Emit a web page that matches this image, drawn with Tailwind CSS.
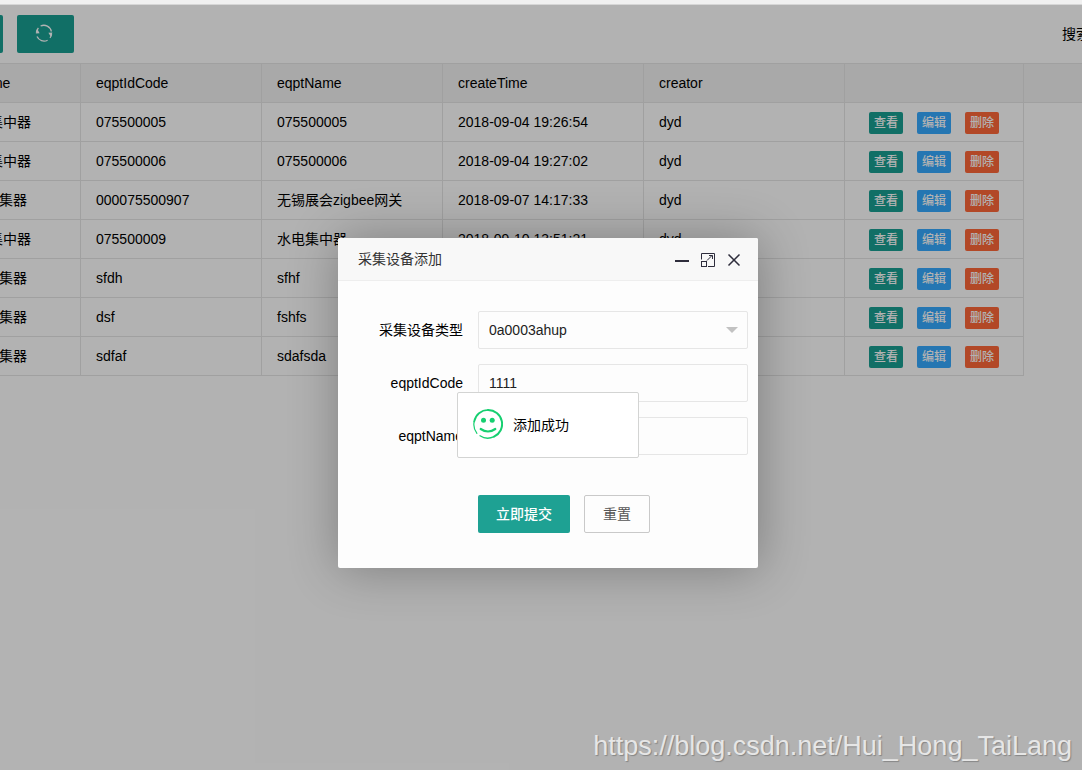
<!DOCTYPE html>
<html lang="zh-CN">
<head>
<meta charset="utf-8">
<title>采集设备</title>
<script src="https://cdn.jsdelivr.net/npm/@tailwindcss/browser@4"></script>
</head>
<body class="relative flex min-h-screen flex-col overflow-hidden bg-white font-['Liberation_Sans','Noto_Sans_CJK_SC',sans-serif] text-sm text-black">
<div class="h-1 bg-[#f0f0f0]"></div>
<main class="relative flex-1 overflow-hidden border-t border-[#d6d6d6]">
  <div class="flex h-[58px] items-center justify-between">
    <div class="-ml-[54px] flex gap-3.5">
      <button type="button" aria-label="添加" class="h-[38px] w-[57px] rounded-xs bg-[#19a093]"></button>
      <button type="button" aria-label="刷新" class="flex h-[38px] w-[57px] items-center justify-center rounded-xs bg-[#19a093] text-white">
        <svg class="-mt-0.5 -ml-1 size-[18px]" viewBox="0 0 18 18" fill="none" stroke="currentColor" stroke-width="1.3">
          <path d="M5.6 2A7.7 7.7 0 0 1 16.4 7.5M15 13.9A7.7 7.7 0 0 0 16.6 10M12.6 16.2A7.7 7.7 0 0 1 2 12.6M1.4 8.6A7.7 7.7 0 0 1 3.4 4"/>
          <path d="M0.8 9.6 2.4 5 4.6 9.2ZM13.4 8.8 17.4 8.4 16 13Z" fill="currentColor" stroke="none"/>
        </svg>
      </button>
    </div>
    <label class="-mr-2 whitespace-nowrap pl-1">搜索</label>
  </div>
  <table class="-ml-[42px] w-[calc(100%+43px)] table-fixed border-separate border-spacing-0 border-t border-[#e6e6e6] text-left [&_td]:border-r [&_td]:border-b [&_td]:border-[#e6e6e6] [&_td]:px-[15px] [&_th]:border-r [&_th]:border-b [&_th]:border-[#e6e6e6] [&_th]:bg-[#f2f2f2] [&_th]:px-[15px] [&_th]:font-normal [&_tr]:h-[39px] [&_tr]:whitespace-nowrap">
    <colgroup><col class="w-[123px]"><col class="w-[181px]"><col class="w-[181px]"><col class="w-[201px]"><col class="w-[201px]"><col class="w-[179px]"><col></colgroup>
    <thead><tr><th>Name</th><th>eqptIdCode</th><th>eqptName</th><th>createTime</th><th>creator</th><th></th><th></th></tr></thead>
    <tbody id="rows"></tbody>
  </table>
</main>
<template id="actions">
  <div class="flex justify-center gap-3.5 pt-0.5 text-xs font-medium text-white">
    <button type="button" class="h-[22px] w-[34px] rounded-xs bg-[#19a093]">查看</button>
    <button type="button" class="h-[22px] w-[34px] rounded-xs bg-[#35a9ff]">编辑</button>
    <button type="button" class="h-[22px] w-[34px] rounded-xs bg-[#ff6838]">删除</button>
  </div>
</template>
<div class="absolute inset-x-0 top-[5px] bottom-0 bg-black/30"></div>

<section role="dialog" aria-labelledby="dialog-title" class="absolute top-[238px] left-[338px] w-[420px] rounded-xs bg-[#fdfdfd] pb-[35px] shadow-[1px_1px_50px_rgba(0,0,0,0.3)]">
  <header class="flex h-[43px] items-center justify-between rounded-t-xs border-b border-[#eee] bg-[#f8f8f8] pr-4 pl-5 text-[#333]">
    <h2 id="dialog-title">采集设备添加</h2>
    <div class="flex gap-2.5 pt-0.5 text-[#2e2d3c]">
      <button type="button" aria-label="最小化"><svg class="size-4" viewBox="0 0 16 16" fill="currentColor"><path d="M1 8h14v2H1z"/></svg></button>
      <button type="button" aria-label="最大化"><svg class="size-4" viewBox="0 0 16 16" fill="none" stroke="currentColor"><path d="M1.5 7.5V1.5H14.5V14.5H8"/><rect x="1.5" y="9.5" width="5" height="5"/><path d="M7 8.5 12 3.5M9 3.5H12.5V7"/></svg></button>
      <button type="button" aria-label="关闭"><svg class="size-4" viewBox="0 0 16 16" fill="none" stroke="currentColor" stroke-width="1.5"><path d="m2.5 2.5 11 11M13.5 2.5l-11 11"/></svg></button>
    </div>
  </header>
  <form class="flex flex-col gap-[15px] pt-[30px] pr-2.5">
    <div class="flex items-center">
      <label for="type" class="w-[140px] pr-[15px] text-right">采集设备类型</label>
      <div class="relative flex-1">
        <select id="type" class="block h-[38px] w-full appearance-none rounded-xs border border-[#e6e6e6] bg-transparent pl-2.5 text-[#222]"><option>0a0003ahup</option></select>
        <svg class="pointer-events-none absolute top-4 right-2.5 h-1.5 w-3" viewBox="0 0 12 6" fill="#c2c2c2"><path d="M0 0h12L6 6z"/></svg>
      </div>
    </div>
    <div class="flex items-center">
      <label for="code" class="w-[140px] pr-[15px] text-right">eqptIdCode</label>
      <input id="code" type="text" value="1111" class="h-[38px] min-w-0 flex-1 rounded-xs border border-[#e6e6e6] bg-transparent pl-2.5 text-[#222]">
    </div>
    <div class="flex items-center">
      <label for="name" class="w-[140px] pr-[15px] text-right">eqptName</label>
      <input id="name" type="text" class="h-[38px] min-w-0 flex-1 rounded-xs border border-[#e6e6e6] bg-transparent pl-2.5">
    </div>
    <div class="flex gap-3.5 pt-[25px] pl-[140px]">
      <button type="button" class="h-[38px] rounded-xs bg-[#1ea193] px-[18px] font-medium text-white">立即提交</button>
      <button type="reset" class="h-[38px] rounded-xs border border-[#c9c9c9] px-[18px] text-[#555]">重置</button>
    </div>
  </form>
</section>

<div role="status" class="absolute top-[392px] left-[457px] flex h-[66px] w-[182px] items-center gap-2.5 rounded-xs border border-[#d3d4d3] bg-white pl-[15px]">
  <svg class="-mt-0.5 size-[30px]" viewBox="0 0 30 30" fill="none" stroke="#16cf70" stroke-linecap="round">
    <path d="M3.9 24.3A14.2 14.2 0 0 1 1.2 12.5" stroke-width="1.2"/>
    <path d="M1.2 12.5A14 14 0 0 1 15 1" stroke-width="1.7"/>
    <path d="M15 1A14 14 0 0 1 21 27.7" stroke-width="2"/>
    <path d="M21 27.7A14.2 14.2 0 0 1 7 26.8" stroke-width="1.3"/>
    <path d="M7.7 20Q15 25 22.3 20" stroke-width="2.2"/>
    <g fill="#16cf70" stroke="none"><circle cx="10.5" cy="11.3" r="2.5"/><circle cx="19.2" cy="11.3" r="2.5"/></g>
  </svg>
  <span>添加成功</span>
</div>

<p class="absolute right-2.5 bottom-2 text-[27px] leading-8 text-[#e6e6e6] [text-shadow:1px_1px_1px_rgba(0,0,0,0.25)]">https://blog.csdn.net/Hui_Hong_TaiLang</p>

<script>
const data = [
  ['集中器', '075500005', '075500005', '2018-09-04 19:26:54', 'dyd'],
  ['集中器', '075500006', '075500006', '2018-09-04 19:27:02', 'dyd'],
  ['采集器', '000075500907', '无锡展会zigbee网关', '2018-09-07 14:17:33', 'dyd'],
  ['集中器', '075500009', '水电集中器', '2018-09-10 13:51:21', 'dyd'],
  ['采集器', 'sfdh', 'sfhf', '', ''],
  ['采集器', 'dsf', 'fshfs', '', ''],
  ['采集器', 'sdfaf', 'sdafsda', '', '']
];
const body = document.getElementById('rows');
for (const row of data) {
  const tr = body.insertRow();
  row.forEach((text, i) => {
    const td = tr.insertCell();
    const span = document.createElement('span');
    span.textContent = text;
    if (i === 0) span.className = text === '集中器' ? 'pl-4' : 'pl-3';
    td.append(span);
  });
  tr.insertCell().append(document.getElementById('actions').content.cloneNode(true));
}
</script>
</body>
</html>
